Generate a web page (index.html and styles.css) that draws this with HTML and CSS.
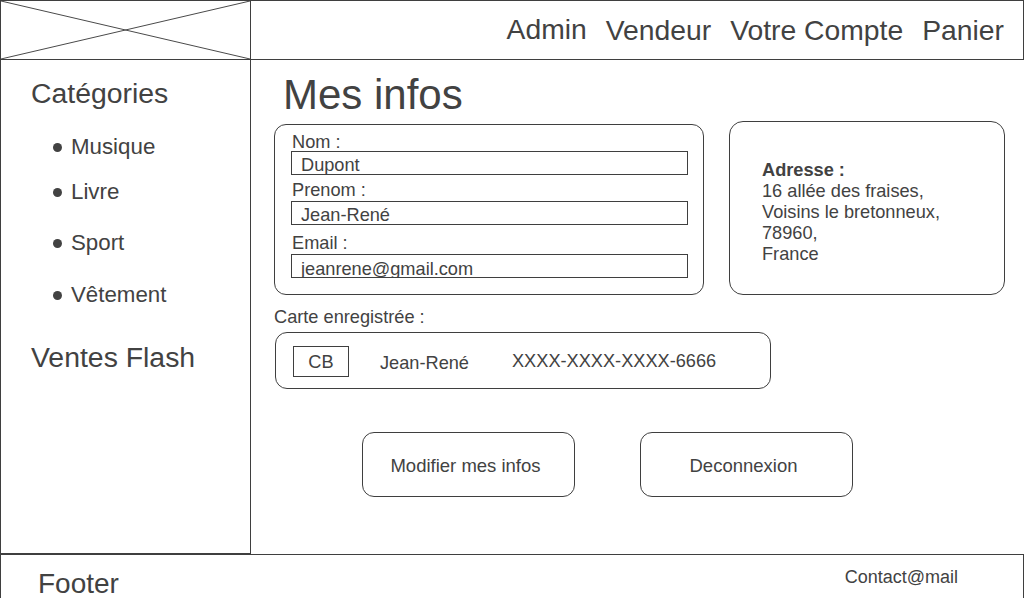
FILE: index.html
```html
<!DOCTYPE html>
<html lang="fr">
<head>
<meta charset="utf-8">
<title>Mes infos</title>
<link rel="stylesheet" href="styles.css">
</head>
<body>
<header class="header">
  <div class="logo">
    <svg class="logo-x" viewBox="0 0 100 100" preserveAspectRatio="none">
      <line x1="0" y1="0" x2="100" y2="100" vector-effect="non-scaling-stroke"/>
      <line x1="0" y1="100" x2="100" y2="0" vector-effect="non-scaling-stroke"/>
    </svg>
  </div>
  <nav class="nav">
    <a class="nav-item nav-admin">Admin</a>
    <a class="nav-item">Vendeur</a>
    <a class="nav-item">Votre Compte</a>
    <a class="nav-item">Panier</a>
  </nav>
</header>
<div class="content">
  <aside class="sidebar">
    <h2 class="side-title">Catégories</h2>
    <ul class="cat-list">
      <li class="cat"><span class="dot"></span>Musique</li>
      <li class="cat"><span class="dot"></span>Livre</li>
      <li class="cat"><span class="dot"></span>Sport</li>
      <li class="cat"><span class="dot"></span>Vêtement</li>
    </ul>
    <h2 class="side-title flash">Ventes Flash</h2>
  </aside>
  <main class="main">
    <h1 class="page-title">Mes infos</h1>
    <div class="info-row">
      <div class="form-box">
        <div class="label">Nom :</div>
        <div class="field">Dupont</div>
        <div class="label l2">Prenom :</div>
        <div class="field">Jean-René</div>
        <div class="label l3">Email :</div>
        <div class="field field-last">jeanrene@gmail.com</div>
      </div>
      <div class="addr-box">
        <div class="addr-title">Adresse :</div>
        <div>16 allée des fraises,</div>
        <div>Voisins le bretonneux,</div>
        <div>78960,</div>
        <div>France</div>
      </div>
    </div>
    <div class="card-label">Carte enregistrée :</div>
    <div class="card-box">
      <div class="cb">CB</div>
      <div class="card-name">Jean-René</div>
      <div class="card-num">XXXX-XXXX-XXXX-6666</div>
    </div>
    <div class="actions">
      <button class="btn">Modifier mes infos</button>
      <button class="btn">Deconnexion</button>
    </div>
  </main>
</div>
<footer class="footer">
  <div class="footer-title">Footer</div>
  <div class="contact">Contact@mail</div>
</footer>
</body>
</html>
```

FILE: styles.css
```css
* { box-sizing: border-box; }
html, body { margin: 0; padding: 0; }
body {
  width: 1024px;
  height: 598px;
  overflow: hidden;
  font-family: "Liberation Sans", Arial, sans-serif;
  color: #424242;
  background: #fff;
}

.header {
  display: flex;
  height: 60px;
  border: 1px solid #3f3f3f;
}
.logo {
  width: 250px;
  border-right: 1px solid #3f3f3f;
  display: flex;
}
.logo-x { width: 100%; height: 100%; display: block; }
.logo-x line { stroke: #4a4a4a; stroke-width: 1; }

.nav {
  margin-left: auto;
  display: flex;
  align-items: center;
  gap: 19px;
  padding-right: 19px;
  font-size: 28.3px;
  line-height: 28px;
}
.nav-item { color: #424242; }
.nav-admin { margin-top: -2px; }

.content {
  display: flex;
  height: 494px;
}
.sidebar {
  width: 251px;
  flex: none;
  border-left: 1px solid #3f3f3f;
  border-right: 1px solid #3f3f3f;
  border-bottom: 1px solid #3f3f3f;
  padding: 19px 0 0 30px;
}
.side-title {
  margin: 0;
  font-weight: normal;
  font-size: 28.4px;
  line-height: 28px;
}
.side-title.flash { margin-top: 37px; }
.cat-list {
  list-style: none;
  margin: 29px 0 0;
  padding: 0;
}
.cat {
  display: flex;
  align-items: center;
  font-size: 22.3px;
  line-height: 22px;
  height: 22px;
}
.cat:nth-child(2) { margin-top: 23px; }
.cat:nth-child(3) { margin-top: 29px; }
.cat:nth-child(4) { margin-top: 30px; }
.dot {
  width: 9px;
  height: 9px;
  border-radius: 50%;
  background: #424242;
  margin: 0 9px 0 22px;
}

.main {
  flex: 1;
  padding: 11px 0 0 23px;
}
.page-title {
  margin: 0 0 0 9px;
  font-weight: normal;
  font-size: 42px;
  line-height: 48px;
  height: 48px;
}
.info-row {
  display: flex;
  align-items: flex-end;
  gap: 25px;
  height: 174px;
  margin-top: 2px;
}
.form-box {
  width: 430px;
  height: 171px;
  border: 1px solid #3f3f3f;
  border-radius: 12px;
  padding: 8px 15px 0 16px;
  font-size: 18.2px;
}
.label { line-height: 18px; height: 18px; margin-bottom: 0; padding-left: 1px; }
.label.l2 { margin-top: 6px; margin-bottom: 2px; }
.label.l3 { margin-top: 9px; margin-bottom: 2px; }
.field {
  height: 24px;
  border: 1px solid #3f3f3f;
  padding: 4px 9px 0;
  line-height: 18px;
  overflow: hidden;
  white-space: nowrap;
}
.field-last { padding-top: 5px; }
.addr-box {
  width: 276px;
  height: 174px;
  border: 1px solid #3f3f3f;
  border-radius: 14px;
  padding: 38px 0 0 32px;
  font-size: 18.2px;
  line-height: 21px;
}
.addr-title { font-weight: bold; }

.card-label {
  margin-top: 13px;
  font-size: 18.2px;
  line-height: 18px;
}
.card-box {
  display: flex;
  align-items: center;
  width: 496px;
  height: 57px;
  margin: 6px 0 0 1px;
  border: 1px solid #3f3f3f;
  border-radius: 12px;
  padding: 1px 0 0 17px;
  font-size: 18.2px;
  line-height: 18px;
}
.cb {
  width: 56px;
  height: 31px;
  border: 1px solid #3f3f3f;
  display: flex;
  align-items: center;
  justify-content: center;
  padding-top: 1px;
}
.card-name { margin-left: 31px; padding-top: 3px; }
.card-num { margin-left: 43px; }

.actions {
  display: flex;
  gap: 65px;
  margin: 43px 0 0 88px;
}
.btn {
  width: 213px;
  height: 65px;
  border: 1px solid #3f3f3f;
  border-radius: 12px;
  background: #fff;
  font-family: "Liberation Sans", Arial, sans-serif;
  font-size: 18.5px;
  color: #424242;
  padding: 2px 6px 0 0;
}

.footer {
  display: flex;
  justify-content: space-between;
  align-items: flex-start;
  height: 60px;
  border: 1px solid #3f3f3f;
  padding: 15px 65px 0 37px;
}
.footer-title { font-size: 28px; line-height: 28px; }
.contact { font-size: 18px; line-height: 18px; margin-top: -2px; }
```
